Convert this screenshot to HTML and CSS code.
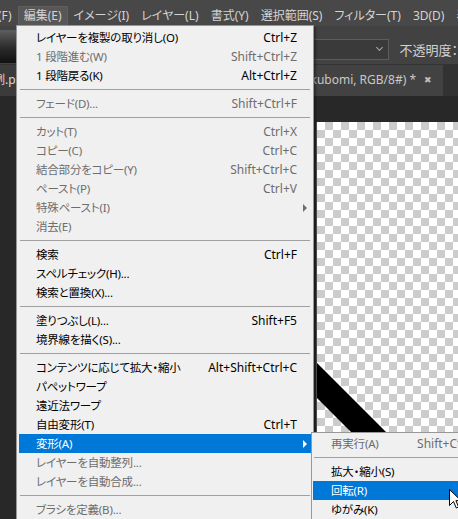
FILE: index.html
```html
<!DOCTYPE html>
<html lang="ja">
<head>
<meta charset="utf-8">
<link rel="stylesheet" href="styles.css">
</head>
<body>
<div class="app">
  <div class="menubar">
    <span class="mb first">(F)</span>
    <span class="mb active">編集(E)</span>
    <span class="mb">イメージ(I)</span>
    <span class="mb">レイヤー(L)</span>
    <span class="mb">書式(Y)</span>
    <span class="mb">選択範囲(S)</span>
    <span class="mb">フィルター(T)</span>
    <span class="mb">3D(D)</span>
    <span class="mb">表示(V)</span>
  </div>
  <div class="optbar">
    <div class="preset"></div>
    <div class="select"><span class="chev"></span></div>
    <span class="opacity">不透明度：</span>
  </div>
  <div class="tabbar">
    <div class="tab tab1"><span class="t1text">例.psd</span></div>
    <div class="tab tab2"><span class="t2text">@ 66.7% (kubomi, RGB/8#) *</span><span class="close">✖</span></div>
  </div>
  <div class="work">
    <div class="canvas">
      <svg class="stroke" width="142" height="400" viewBox="0 0 142 400">
        <polygon points="0,241 142,383 142,418 0,276" fill="#000"/>
      </svg>
    </div>
  </div>

  <div class="menu">
    <div class="mi"><span class="lbl">レイヤーを複製の取り消し(O)</span><span class="sc">Ctrl+Z</span><span class="arr"></span></div>
    <div class="mi dis"><span class="lbl">1 段階進む(W)</span><span class="sc">Shift+Ctrl+Z</span><span class="arr"></span></div>
    <div class="mi"><span class="lbl">1 段階戻る(K)</span><span class="sc">Alt+Ctrl+Z</span><span class="arr"></span></div>
    <div class="sep"></div>
    <div class="mi dis"><span class="lbl">フェード(D)...</span><span class="sc">Shift+Ctrl+F</span><span class="arr"></span></div>
    <div class="sep"></div>
    <div class="mi dis"><span class="lbl">カット(T)</span><span class="sc">Ctrl+X</span><span class="arr"></span></div>
    <div class="mi dis"><span class="lbl">コピー(C)</span><span class="sc">Ctrl+C</span><span class="arr"></span></div>
    <div class="mi dis"><span class="lbl">結合部分をコピー(Y)</span><span class="sc">Shift+Ctrl+C</span><span class="arr"></span></div>
    <div class="mi dis"><span class="lbl">ペースト(P)</span><span class="sc">Ctrl+V</span><span class="arr"></span></div>
    <div class="mi dis"><span class="lbl">特殊ペースト(I)</span><span class="sc"></span><span class="arr"><i class="tri"></i></span></div>
    <div class="mi dis"><span class="lbl">消去(E)</span><span class="sc"></span><span class="arr"></span></div>
    <div class="sep"></div>
    <div class="mi"><span class="lbl">検索</span><span class="sc">Ctrl+F</span><span class="arr"></span></div>
    <div class="mi"><span class="lbl">スペルチェック(H)...</span><span class="sc"></span><span class="arr"></span></div>
    <div class="mi"><span class="lbl">検索と置換(X)...</span><span class="sc"></span><span class="arr"></span></div>
    <div class="sep"></div>
    <div class="mi"><span class="lbl">塗りつぶし(L)...</span><span class="sc">Shift+F5</span><span class="arr"></span></div>
    <div class="mi"><span class="lbl">境界線を描く(S)...</span><span class="sc"></span><span class="arr"></span></div>
    <div class="sep"></div>
    <div class="mi"><span class="lbl">コンテンツに応じて拡大・縮小</span><span class="sc">Alt+Shift+Ctrl+C</span><span class="arr"></span></div>
    <div class="mi"><span class="lbl">パペットワープ</span><span class="sc"></span><span class="arr"></span></div>
    <div class="mi"><span class="lbl">遠近法ワープ</span><span class="sc"></span><span class="arr"></span></div>
    <div class="mi"><span class="lbl">自由変形(T)</span><span class="sc">Ctrl+T</span><span class="arr"></span></div>
    <div class="mi hl"><span class="lbl">変形(A)</span><span class="sc"></span><span class="arr"><i class="tri"></i></span></div>
    <div class="mi dis"><span class="lbl">レイヤーを自動整列...</span><span class="sc"></span><span class="arr"></span></div>
    <div class="mi dis"><span class="lbl">レイヤーを自動合成...</span><span class="sc"></span><span class="arr"></span></div>
    <div class="sep"></div>
    <div class="mi dis"><span class="lbl">ブラシを定義(B)...</span><span class="sc"></span><span class="arr"></span></div>
  </div>

  <div class="submenu">
    <div class="si dis"><span class="lbl">再実行(A)</span><span class="sc">Shift+Ctrl+T</span></div>
    <div class="sep"></div>
    <div class="si"><span class="lbl">拡大・縮小(S)</span><span class="sc"></span></div>
    <div class="si hl"><span class="lbl">回転(R)</span><span class="sc"></span></div>
    <div class="si"><span class="lbl">ゆがみ(K)</span><span class="sc"></span></div>
  </div>

  <svg class="cursor" width="13" height="21" viewBox="0 0 13 21">
    <path d="M0.5,0.5 L0.5,16.5 L4.5,12.5 L7.3,19 L9.6,18 L6.9,11.6 L12,11.6 Z" fill="#fff" stroke="#000" stroke-width="1" stroke-linejoin="miter"/>
  </svg>
</div>
</body>
</html>
```

FILE: styles.css
```css
* { box-sizing: border-box; margin: 0; padding: 0; }
html, body { width: 458px; height: 519px; overflow: hidden; background: #282828; }
body {
  font-family: "Noto Sans", "Noto Sans CJK JP", sans-serif;
  font-size: 12px;
  font-feature-settings: "palt";
}
.app { position: relative; width: 458px; height: 519px; overflow: hidden; display: flex; flex-direction: column; }

/* menu bar */
.menubar {
  height: 26px; flex: none; background: #484848; color: #d4d4d4;
  display: flex; align-items: flex-start; white-space: nowrap; padding-top: 6px;
}
.mb { height: 20px; line-height: 20px; padding: 0 6px; }
.mb.first { margin-left: -8px; }
.mb.active { background: #575757; box-shadow: inset 0 0 0 1px #5f5f5f; }

/* options bar */
.optbar {
  height: 39px; flex: none; background: #424242; display: flex; align-items: flex-start;
  border-bottom: 1px solid #333;
}
.preset {
  width: 16px; height: 33px; margin-top: 4px;
  background: linear-gradient(180deg, #5e5e5e 0%, #2a2a2a 55%, #111 100%);
}
.select {
  margin-left: 234px; margin-top: 13px; width: 140px; height: 21px;
  background: #3a3a3a; border: 1px solid #5c5c5c; position: relative;
}
.chev {
  position: absolute; right: 6px; top: 5px; width: 5px; height: 5px;
  border-right: 1px solid #a8a8a8; border-bottom: 1px solid #a8a8a8; transform: rotate(45deg);
}
.opacity { margin-left: 10px; margin-top: 14px; color: #d2d2d2; font-size: 13px; line-height: 20px; white-space: nowrap; }

/* tabs */
.tabbar { height: 31px; flex: none; background: #323232; display: flex; white-space: nowrap; }
.tab { height: 31px; line-height: 30px; color: #d8d8d8; overflow: hidden; }
.tab1 { width: 120px; background: #3b3b3b; }
.t1text { margin-left: -7px; }
.tab2 {
  width: 323px; background: #424242; display: flex; justify-content: flex-end; color: #c8c8c8;
  padding-right: 11px; border-left: 1px solid #2a2a2a;
}
.close { margin-left: 8px; font-size: 9px; color: #bdbdbd; }

/* workspace */
.work { flex: 1; background: #282828; padding: 26px 0 0 316px; }
.canvas {
  width: 142px; height: 400px; border-left: 1px solid #555;
  background-color: #fff;
  background-image:
    linear-gradient(45deg, #cccccc 25%, transparent 25%, transparent 75%, #cccccc 75%),
    linear-gradient(45deg, #cccccc 25%, transparent 25%, transparent 75%, #cccccc 75%);
  background-size: 16px 16px;
  background-position: 0 0, 8px 8px;
}
.stroke { display: block; }

/* dropdown menu */
.menu {
  position: absolute; left: 16px; top: 25px; width: 298px;
  background: #f0f0f0; border: 1px solid #979797; padding: 2px;
  box-shadow: 2px 2px 2px rgba(0,0,0,0.35);
  color: #000;
}
.mi { display: flex; height: 19px; line-height: 19px; padding: 0 4px 0 17px; white-space: nowrap; }
.mi .lbl, .si .lbl { flex: 1; font-size: 11.5px; letter-spacing: -0.2px; }
.mi .sc { text-align: right; }
.mi .arr { width: 10px; display: flex; align-items: center; justify-content: flex-end; }
.tri {
  display: block; width: 0; height: 0;
  border-left: 4px solid #6d6d6d; border-top: 4px solid transparent; border-bottom: 4px solid transparent;
}
.dis { color: #6d6d6d; }
.hl { background: #0078d7; color: #fff; }
.hl .tri { border-left-color: #fff; }
.sep { height: 9px; padding-top: 4px; margin: 0 1px; }
.sep::before { content: ""; display: block; border-top: 1px solid #a0a0a0; }

/* submenu */
.submenu {
  position: absolute; left: 311px; top: 432px; width: 188px;
  background: #f0f0f0; border: 1px solid #979797; padding: 1px;
  box-shadow: 2px 2px 2px rgba(0,0,0,0.35);
}
.si { display: flex; height: 19px; line-height: 19px; padding: 0 14px 0 18px; white-space: nowrap; }

.cursor { position: absolute; left: 449px; top: 489px; }
```
